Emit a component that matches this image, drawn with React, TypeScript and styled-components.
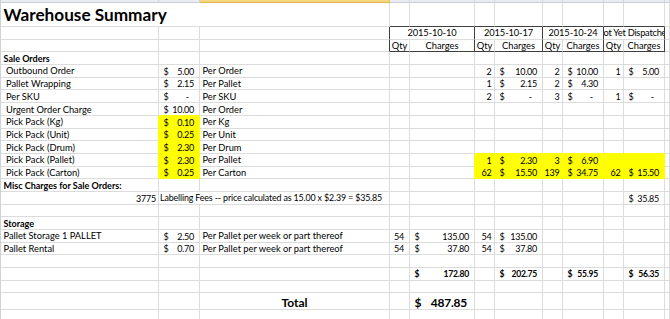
import React from 'react';
import styled, { createGlobalStyle } from 'styled-components';

const GRID = '#dcdcdc';
const DARK = '#3f3f3f';
const YELLOW = '#ffff00';
const NCOLS = 12;

const GlobalStyle = createGlobalStyle`
  html, body { margin: 0; padding: 0; background: #fff; }
  body { font-family: Lato, "Liberation Sans", Arial, sans-serif; color: #000; }
`;

const Page = styled.div`
  width: 670px;
  height: 319px;
  overflow: hidden;
  background: #fff;
`;

const ColumnHeaders = styled.div`
  display: flex;
  height: 3px;
  border-left: 1px solid #cfd3d8;
`;

const ColumnHeader = styled.div<{ $w?: number; $active?: boolean }>`
  flex: ${p => (p.$w ? `0 0 ${p.$w}px` : '1 1 auto')};
  box-sizing: border-box;
  height: 3px;
  background: ${p => (p.$active ? '#f6d57c' : '#e9ecf0')};
  border-right: 1px solid ${p => (p.$active ? '#e6bd5c' : '#d3d7dc')};
  border-bottom: 1px solid ${p => (p.$active ? '#e3b654' : '#c9ced5')};
`;

const Sheet = styled.div`
  display: grid;
  grid-template-columns: 158px 41px 190px 20px 65px 20px 48px 20px 41px 20px 41px 1fr;
  grid-template-rows: 24px repeat(21, 12.7px) 16.3px 12px;
  border-left: 1px solid #cfd3d8;
`;

const Cell = styled.div<{
  $span: number;
  $rb: string;
  $bb: string;
  $fill?: boolean;
  $justify: string;
  $valign: string;
  $pl: number;
  $pr: number;
  $pb: number;
}>`
  grid-column: span ${p => p.$span};
  box-sizing: border-box;
  min-width: 0;
  overflow: hidden;
  display: flex;
  align-items: ${p => p.$valign};
  justify-content: ${p => p.$justify};
  padding: 0 ${p => p.$pr}px ${p => p.$pb}px ${p => p.$pl}px;
  background: ${p => (p.$fill ? YELLOW : '#fff')};
  border-right: 1px solid ${p => p.$rb};
  border-bottom: 1px solid ${p => p.$bb};
  white-space: nowrap;
`;

const Label = styled.span<{ $bold?: boolean; $size: number; $tight?: number }>`
  flex: none;
  font-size: ${p => p.$size}px;
  font-weight: ${p => (p.$bold ? 700 : 400)};
  letter-spacing: ${p => p.$tight ?? 0}px;
  line-height: 1;
`;

const Dash = styled(Label)`
  margin-right: 5px;
`;

type Kind = 'text' | 'acct' | 'qty' | 'center';
interface Spec {
  col: number;
  span?: number;
  kind?: Kind;
  v?: string;
  bold?: boolean;
  size?: number;
  tight?: number;
  fill?: boolean;
  pl?: number;
  pr?: number;
}
interface Built extends Spec {
  span: number;
  rb: string;
  bb: string;
}

type Opt = Partial<Spec>;
const t = (col: number, v: string, o: Opt = {}): Spec => ({ col, v, kind: 'text', ...o });
const a = (col: number, v: string, o: Opt = {}): Spec => ({ col, v, kind: 'acct', ...o });
const q = (col: number, v: string, o: Opt = {}): Spec => ({ col, v, kind: 'qty', ...o });
const c = (col: number, v: string, o: Opt = {}): Spec => ({ col, v, kind: 'center', ...o });

const F: Opt = { fill: true };
const IND: Opt = { pl: 5 };
const B: Opt = { bold: true, size: 9 };
const TOT: Opt = { bold: true, size: 8.6 };

const rowsData: Spec[][] = [
  [t(0, 'Warehouse Summary', { span: 3, bold: true, size: 17.2, pl: 2.5 })],
  [
    c(3, '2015-10-10', { span: 2, tight: -0.1 }),
    c(5, '2015-10-17', { span: 2, tight: -0.1 }),
    c(7, '2015-10-24', { span: 2, tight: -0.1 }),
    c(9, 'Not Yet Dispatched', { span: 2, tight: -0.25 }),
  ],
  [c(3, 'Qty'), c(4, 'Charges'), c(5, 'Qty'), c(6, 'Charges'), c(7, 'Qty'), c(8, 'Charges'), c(9, 'Qty'), c(10, 'Charges')],
  [t(0, 'Sale Orders', B)],
  [t(0, 'Outbound Order', IND), a(1, '5.00'), t(2, 'Per Order'), q(5, '2'), a(6, '10.00'), q(7, '2'), a(8, '10.00'), q(9, '1'), a(10, '5.00')],
  [t(0, 'Pallet Wrapping', IND), a(1, '2.15'), t(2, 'Per Pallet'), q(5, '1'), a(6, '2.15'), q(7, '2'), a(8, '4.30')],
  [t(0, 'Per SKU', IND), a(1, '-'), t(2, 'Per SKU'), q(5, '2'), a(6, '-'), q(7, '3'), a(8, '-'), q(9, '1'), a(10, '-')],
  [t(0, 'Urgent Order Charge', IND), a(1, '10.00'), t(2, 'Per Order')],
  [t(0, 'Pick Pack (Kg)', IND), a(1, '0.10', F), t(2, 'Per Kg')],
  [t(0, 'Pick Pack (Unit)', IND), a(1, '0.25', F), t(2, 'Per Unit')],
  [t(0, 'Pick Pack (Drum)', IND), a(1, '2.30', F), t(2, 'Per Drum')],
  [
    t(0, 'Pick Pack (Pallet)', IND), a(1, '2.30', F), t(2, 'Per Pallet'),
    q(5, '1', F), a(6, '2.30', F), q(7, '3', F), a(8, '6.90', F), t(9, '', F), t(10, '', F),
  ],
  [
    t(0, 'Pick Pack (Carton)', IND), a(1, '0.25', F), t(2, 'Per Carton'),
    q(5, '62', F), a(6, '15.50', F), q(7, '139', F), a(8, '34.75', F), q(9, '62', F), a(10, '15.50', F),
  ],
  [t(0, 'Misc Charges for Sale Orders:', B)],
  [
    q(0, '3775', { pr: 2 }),
    t(1, 'Labelling Fees -- price calculated as 15.00 x $2.39 = $35.85', { span: 2, pl: 1, size: 8.9, tight: -0.15 }),
    a(10, '35.85'),
  ],
  [],
  [t(0, 'Storage', B)],
  [t(0, 'Pallet Storage 1 PALLET'), a(1, '2.50'), t(2, 'Per Pallet per week or part thereof'), q(3, '54', { pr: 5 }), a(4, '135.00'), q(5, '54'), a(6, '135.00')],
  [t(0, 'Pallet Rental'), a(1, '0.70'), t(2, 'Per Pallet per week or part thereof'), q(3, '54', { pr: 5 }), a(4, '37.80'), q(5, '54'), a(6, '37.80')],
  [],
  [a(4, '172.80', TOT), a(6, '202.75', TOT), a(8, '55.95', TOT), a(10, '56.35', TOT)],
  [],
  [c(2, 'Total', { bold: true, size: 12 }), a(4, '487.85', { bold: true, size: 12, pr: 7 })],
  [],
];

function build(): Built[][] {
  const grid: Built[][] = rowsData.map(specs => {
    const out: Built[] = [];
    let col = 0;
    const sorted = [...specs].sort((x, y) => x.col - y.col);
    for (const s of sorted) {
      while (col < s.col) {
        out.push({ col, span: 1, rb: GRID, bb: GRID });
        col++;
      }
      const span = s.span ?? 1;
      out.push({ ...s, span, rb: GRID, bb: GRID });
      col += span;
    }
    while (col < NCOLS) {
      out.push({ col, span: 1, rb: GRID, bb: GRID });
      col++;
    }
    return out;
  });
  const at = (r: number, col: number) =>
    grid[r]?.find(x => col >= x.col && col < x.col + x.span);

  for (let col = 3; col <= 10; col++) {
    const cell = at(0, col);
    if (cell) cell.bb = DARK;
  }
  [1, 2].forEach(r => {
    at(r, 2)!.rb = DARK;
    [4, 6, 8, 10].forEach(col => (at(r, col)!.rb = DARK));
  });
  for (let col = 3; col <= 10; col++) at(2, col)!.bb = DARK;

  grid.forEach((row, r) =>
    row.forEach(cell => {
      if (!cell.fill) return;
      cell.rb = YELLOW;
      cell.bb = YELLOW;
      const left = at(r, cell.col - 1);
      if (left) left.rb = YELLOW;
      for (let k = cell.col; k < cell.col + cell.span; k++) {
        const up = at(r - 1, k);
        if (up) up.bb = YELLOW;
      }
    })
  );
  return grid;
}

const JUSTIFY: Record<Kind, string> = {
  text: 'flex-start',
  acct: 'space-between',
  qty: 'flex-end',
  center: 'center',
};
const PAD: Record<Kind, [number, number]> = {
  text: [2.5, 0],
  acct: [4.5, 5],
  qty: [0, 2.5],
  center: [0, 0],
};

function Content({ cell }: { cell: Built }) {
  const numeric = cell.kind === 'acct' || cell.kind === 'qty';
  const size = cell.size ?? (numeric ? 9 : 9.3);
  const tight = cell.tight ?? (numeric ? -0.25 : 0);
  if (cell.kind === 'acct') {
    return (
      <>
        <Label $size={size} $bold={cell.bold}>$</Label>
        {cell.v === '-' ? (
          <Dash $size={size} $bold={cell.bold}>-</Dash>
        ) : (
          <Label $size={size} $bold={cell.bold} $tight={tight}>
            {cell.v}
          </Label>
        )}
      </>
    );
  }
  if (cell.v) {
    return (
      <Label $size={size} $bold={cell.bold} $tight={tight}>
        {cell.v}
      </Label>
    );
  }
  return null;
}

const HEADER_WIDTHS = [158, 41, 190, 20, 65, 20, 48, 20, 41, 20, 41];

export default function App() {
  const grid = build();
  return (
    <Page>
      <GlobalStyle />
      <ColumnHeaders>
        {HEADER_WIDTHS.map((w, i) => (
          <ColumnHeader key={i} $w={w} $active={i === 2} />
        ))}
        <ColumnHeader />
      </ColumnHeaders>
      <Sheet>
        {grid.map((row, r) =>
          row.map(cell => {
            const kind: Kind = cell.kind ?? 'text';
            const [dpl, dpr] = PAD[kind];
            return (
              <Cell
                key={`${r}-${cell.col}`}
                $span={cell.span}
                $rb={cell.rb}
                $bb={cell.bb}
                $fill={cell.fill}
                $justify={JUSTIFY[kind]}
                $valign={r === 0 ? 'center' : 'flex-end'}
                $pl={cell.pl ?? dpl}
                $pr={cell.pr ?? dpr}
                $pb={r === 0 || r === 22 ? 0 : 1}
              >
                <Content cell={cell} />
              </Cell>
            );
          })
        )}
      </Sheet>
    </Page>
  );
}
